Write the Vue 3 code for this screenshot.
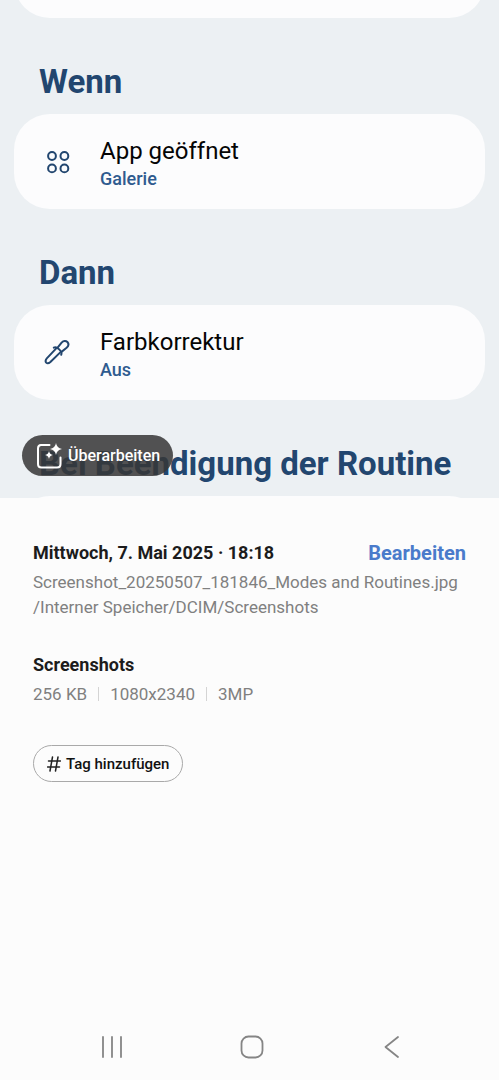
<script setup>
const routines = [
  { heading: 'Wenn', title: 'App geöffnet', detail: 'Galerie', icon: 'apps' },
  { heading: 'Dann', title: 'Farbkorrektur', detail: 'Aus', icon: 'dropper' },
]
const facts = ['256 KB', '1080x2340', '3MP']
</script>

<template>
  <div class="screen">
    <main class="content">
      <section class="photo">
        <div class="card card-top"></div>
        <template v-for="item in routines" :key="item.heading">
          <h2 class="heading">{{ item.heading }}</h2>
          <div class="card">
            <svg v-if="item.icon === 'apps'" class="card-icon" viewBox="0 0 28 28" aria-hidden="true">
              <circle cx="8" cy="8" r="3.9" />
              <circle cx="20.4" cy="8" r="3.9" />
              <circle cx="8" cy="20.4" r="3.9" />
              <circle cx="20.4" cy="20.4" r="3.9" />
            </svg>
            <svg v-else class="card-icon" viewBox="0 0 28 28" aria-hidden="true">
              <path d="M14 8.200 L17.600 3.600 C19.600 1.400 22 1.600 23.400 3 C24.800 4.600 24.600 7 22.600 8.800 L17.800 12.600" />
              <path d="M9.800 8.600 C11.600 7.600 13 8.200 15.200 10.400 C17.400 12.600 18.200 13.800 17.200 15.800" />
              <path d="M12 9.600 L2.800 19.400 C1.600 20.800 1.400 22.600 2.200 23.600 C3.200 24.600 5 24.200 6.400 23 L16 13.600" />
            </svg>
            <div class="card-text">
              <div class="card-title">{{ item.title }}</div>
              <div class="card-detail">{{ item.detail }}</div>
            </div>
          </div>
        </template>
        <h2 class="heading">Bei Beendigung der Routine</h2>
        <div class="card card-bottom"></div>
        <button class="remaster" type="button">
          <svg class="remaster-icon" viewBox="0 0 26 26" aria-hidden="true">
            <path class="frame" d="M13.500 2 H5 Q2 2 2 5.500 V21 Q2 24.500 5.500 24.500 H21 Q24.500 24.500 24.500 21 V14.500" />
            <path class="star" d="M20 0 Q20.800 5.200 26 6 Q20.800 6.800 20 12 Q19.200 6.800 14 6 Q19.200 5.200 20 0Z" />
            <path class="star" d="M13 8 Q13.600 11.400 17 12 Q13.600 12.600 13 16 Q12.400 12.600 9 12 Q12.400 11.400 13 8Z" />
          </svg>
          Überarbeiten
        </button>
      </section>

      <section class="details">
        <div class="date-row">
          <h3 class="label">Mittwoch, 7. Mai 2025 · 18:18</h3>
          <button class="edit" type="button">Bearbeiten</button>
        </div>
        <div class="path">Screenshot_20250507_181846_Modes and Routines.jpg</div>
        <div class="path">/Interner Speicher/DCIM/Screenshots</div>
        <h3 class="label album">Screenshots</h3>
        <ul class="facts">
          <li v-for="fact in facts" :key="fact">{{ fact }}</li>
        </ul>
        <button class="tag" type="button">
          <svg class="hash" viewBox="0 0 14 16" aria-hidden="true">
            <path d="M5.500 1 L3 15 M11 1 L8.500 15 M1.500 5 H13.500 M.5 11 H12.500" />
          </svg>
          Tag hinzufügen
        </button>
      </section>
    </main>

    <nav class="navbar" aria-label="Navigation">
      <button type="button" aria-label="Letzte Apps">
        <svg viewBox="0 0 24 24"><path d="M3 2 V22 M12 2 V22 M21 2 V22" /></svg>
      </button>
      <button type="button" aria-label="Startseite">
        <svg viewBox="0 0 24 24"><rect x="1.500" y="1.500" width="21" height="21" rx="7" /></svg>
      </button>
      <button type="button" aria-label="Zurück">
        <svg viewBox="0 0 24 24"><path d="M18 2 L5.500 12 L18 22" /></svg>
      </button>
    </nav>
  </div>
</template>

<style>
body {
  margin: 0;
  background: #fcfcfc;
}
</style>

<style scoped>
.screen {
  display: flex;
  flex-direction: column;
  min-height: 100vh;
  font-family: Roboto, sans-serif;
  background: #fcfcfc;
}
.content {
  flex: 1;
}
button {
  padding: 0;
  border: 0;
  background: none;
  font-family: inherit;
}
svg {
  flex: none;
  fill: none;
  stroke-linecap: round;
  stroke-linejoin: round;
}
.photo {
  position: relative;
  padding: 0 14px;
  overflow: hidden;
  background: #ecf0f3;
}
.card {
  box-sizing: border-box;
  display: flex;
  align-items: center;
  gap: 28px;
  min-height: 95px;
  padding: 0 30px;
  border-radius: 36px;
  background: #fcfcfd;
}
.card-top {
  margin-top: -77px;
}
.card-bottom {
  margin-bottom: -93px;
}
.heading {
  margin: 0;
  padding: 44px 25px 12px;
  font-size: 33px;
  line-height: 40px;
  font-weight: 700;
  color: #22466f;
  white-space: nowrap;
}
.card-icon {
  width: 28px;
  height: 28px;
  stroke: #22466f;
  stroke-width: 2;
}
.card-text {
  padding-top: 4px;
}
.card-title {
  font-size: 24px;
  line-height: 30px;
  color: #050505;
}
.card-detail {
  font-size: 18px;
  line-height: 25px;
  font-weight: 500;
  color: #2f5b8f;
}
.remaster {
  position: absolute;
  bottom: 22px;
  left: 22px;
  display: flex;
  align-items: center;
  gap: 6px;
  height: 41px;
  padding: 0 13px 0 14px;
  border-radius: 21px;
  background: rgba(55, 55, 55, 0.86);
  font-size: 16px;
  font-weight: 500;
  color: #fff;
}
.remaster-icon {
  width: 26px;
  height: 26px;
}
.frame {
  stroke: #fff;
  stroke-width: 2;
}
.star {
  fill: #fff;
}
.details {
  padding: 41px 33px 0;
}
.date-row {
  display: flex;
  align-items: center;
  justify-content: space-between;
  margin-bottom: 3px;
}
.label {
  margin: 0;
  font-size: 18px;
  line-height: 28px;
  font-weight: 700;
  color: #1c1c1c;
}
.edit {
  font-size: 20px;
  line-height: 28px;
  font-weight: 700;
  color: #4a7bcb;
}
.path {
  font-size: 17px;
  line-height: 25px;
  color: #808080;
  white-space: nowrap;
}
.album {
  margin-top: 31px;
}
.facts {
  display: flex;
  margin: 2px 0 38px;
  padding: 0;
  list-style: none;
  font-size: 17px;
  line-height: 26px;
  color: #808080;
}
.facts li {
  display: flex;
  align-items: center;
}
.facts li + li::before {
  content: '';
  width: 1px;
  height: 14px;
  margin: 0 11px;
  background: #d4d4d4;
}
.tag {
  display: flex;
  align-items: center;
  gap: 5px;
  height: 37px;
  padding: 0 13px;
  border: 1px solid #a9a9a9;
  border-radius: 19px;
  font-size: 15px;
  font-weight: 500;
  color: #111;
}
.hash {
  width: 14px;
  height: 16px;
  stroke: #222;
  stroke-width: 1.500;
}
.navbar {
  display: flex;
  justify-content: center;
  gap: 116px;
  padding: 0 0 21px 4px;
}
.navbar button {
  display: flex;
}
.navbar svg {
  width: 24px;
  height: 24px;
  stroke: #858585;
  stroke-width: 1.800;
}
</style>
